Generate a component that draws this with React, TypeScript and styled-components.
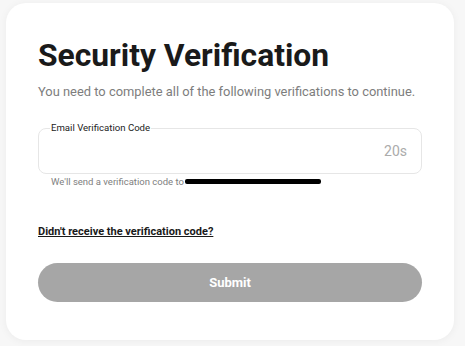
import React from "react";
import styled, { createGlobalStyle } from "styled-components";

const Global = createGlobalStyle`
  html, body { margin: 0; padding: 0; background: #f7f7f7; }
  body { font-family: Roboto, "Liberation Sans", sans-serif; }
  * { box-sizing: border-box; }
`;

const Page = styled.div`
  width: 465px;
  height: 346px;
  padding: 3px 11px 6px 6px;
  background: #f7f7f7;
`;

const Card = styled.div`
  width: 448px;
  height: 337px;
  background: #ffffff;
  border-radius: 20px;
  box-shadow: 0 1px 8px rgba(0, 0, 0, 0.05);
  padding: 32px 32px 0 32px;
  display: flex;
  flex-direction: column;
`;

const Title = styled.h1`
  margin: 0;
  font-size: 31.8px;
  line-height: 40px;
  font-weight: 700;
  color: #1a1a1a;
`;

const Subtitle = styled.p`
  margin: 8px 0 0 0;
  font-size: 12.9px;
  line-height: 18px;
  color: #7d7d7d;
  white-space: nowrap;
`;

const Field = styled.fieldset`
  margin: 21px 0 0 0;
  padding: 8px 14px 0;
  height: 52px;
  border: 1px solid #e6e6e6;
  border-radius: 8px;
  text-align: right;
`;

const Legend = styled.legend`
  padding: 0 1px;
  margin-left: -3px;
  font-size: 9.6px;
  line-height: 12px;
  color: #222;
  text-align: left;
`;

const Timer = styled.span`
  display: block;
  font-size: 14px;
  line-height: 18px;
  color: #ababab;
`;

const Helper = styled.div`
  margin: 2px 0 0 13px;
  display: flex;
  align-items: center;
  font-size: 9.5px;
  line-height: 12px;
  color: #808080;
`;

const Redacted = styled.span`
  display: inline-block;
  width: 136px;
  height: 5px;
  background: #000;
  border-radius: 2px;
  margin-left: 1px;
  margin-top: -1px;
`;

const Link = styled.a`
  margin-top: 37px;
  font-size: 11px;
  line-height: 13px;
  font-weight: 700;
  color: #1a1a1a;
  text-decoration: underline;
  align-self: flex-start;
`;

const Submit = styled.button`
  margin-top: 25px;
  height: 39px;
  width: 100%;
  border: none;
  border-radius: 20px;
  background: #a6a6a6;
  color: #ffffff;
  font-family: Roboto, "Liberation Sans", sans-serif;
  font-size: 13px;
  font-weight: 700;
`;

export default function App() {
  return (
    <Page>
      <Global />
      <Card>
        <Title>Security Verification</Title>
        <Subtitle>You need to complete all of the following verifications to continue.</Subtitle>
        <Field>
          <Legend>Email Verification Code</Legend>
          <Timer>20s</Timer>
        </Field>
        <Helper>
          We'll send a verification code to
          <Redacted />
        </Helper>
        <Link>Didn't receive the verification code?</Link>
        <Submit>Submit</Submit>
      </Card>
    </Page>
  );
}
